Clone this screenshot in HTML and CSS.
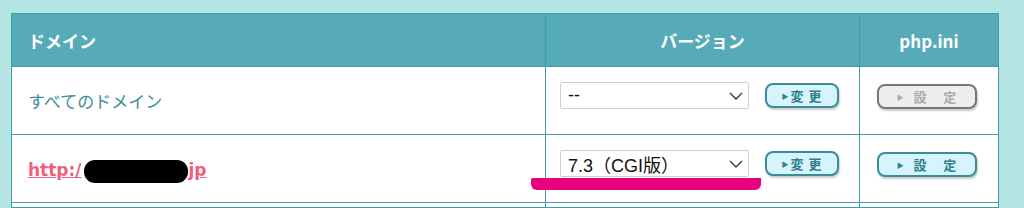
FILE: index.html
```html
<!DOCTYPE html>
<html lang="ja">
<head>
    <meta charset="UTF-8">
    <title>PHP Version</title>
    <link rel="stylesheet" href="styles.css">
</head>
<body>
    <div class="panel">
        <table class="php-table">
            <thead>
                <tr>
                    <th class="col-domain">ドメイン</th>
                    <th class="col-version">バージョン</th>
                    <th class="col-ini">php.ini</th>
                </tr>
            </thead>
            <tbody>
                <tr>
                    <td class="domain-all">すべてのドメイン</td>
                    <td class="version-cell">
                        <div class="version-form">
                            <div class="select-box">
                                <span>--</span>
                                <svg class="chevron" width="14" height="8" viewBox="0 0 14 8"><path d="M1 1 L7 7 L13 1" fill="none" stroke="#333" stroke-width="1.3"/></svg>
                            </div>
                            <button class="img-btn"><span class="tri">▶</span>変&nbsp;更</button>
                        </div>
                    </td>
                    <td class="ini-cell">
                        <button class="img-btn wide disabled"><span class="tri">▶</span>&nbsp;&nbsp;設&nbsp;&nbsp;&nbsp;&nbsp;定</button>
                    </td>
                </tr>
                <tr>
                    <td><a class="domain-link" href="#">http:/<span class="redact"></span>jp</a></td>
                    <td class="version-cell">
                        <div class="version-form">
                            <div class="select-box">
                                <span>7.3（CGI版）</span>
                                <svg class="chevron" width="14" height="8" viewBox="0 0 14 8"><path d="M1 1 L7 7 L13 1" fill="none" stroke="#333" stroke-width="1.3"/></svg>
                            </div>
                            <button class="img-btn"><span class="tri">▶</span>変&nbsp;更</button>
                        </div>
                        <div class="marker"></div>
                    </td>
                    <td class="ini-cell">
                        <button class="img-btn wide"><span class="tri">▶</span>&nbsp;&nbsp;設&nbsp;&nbsp;&nbsp;&nbsp;定</button>
                    </td>
                </tr>
                <tr class="cut-row">
                    <td></td><td></td><td></td>
                </tr>
            </tbody>
        </table>
    </div>
</body>
</html>
```
FILE: styles.css
```css
body {
    margin: 0;
    background-color: #b5e5e3;
    font-family: "Noto Sans CJK JP", "Noto Sans", sans-serif;
    overflow: hidden;
}

.panel {
    padding: 13px 0 0 11px;
}

.php-table {
    width: 988px;
    border-collapse: collapse;
    background-color: #fff;
    table-layout: fixed;
}

.php-table th,
.php-table td {
    border: 1px solid #3f9dab;
    padding: 0;
}

.php-table th {
    height: 52px;
    background-color: #57abb9;
    color: #fff;
    font-size: 17px;
    font-weight: bold;
}

.col-domain {
    width: 517px;
    text-align: left;
    padding-left: 16px !important;
}

.col-version {
    width: 313px;
}

.php-table td {
    height: 67px;
    vertical-align: middle;
}

.domain-all {
    padding-left: 16px !important;
    color: #3a8f9d;
    font-size: 17px;
}

.domain-link {
    margin-left: 16px;
    color: #f0607a;
    font-family: "DejaVu Sans", sans-serif;
    font-size: 17px;
    font-weight: 600;
    text-decoration: underline;
}

.redact {
    display: inline-block;
    width: 104px;
    height: 23px;
    margin: 0 1px -7px 2px;
    background-color: #000;
    border-radius: 11px;
}

.version-cell {
    position: relative;
}

.version-form {
    display: flex;
    align-items: center;
    gap: 16px;
    padding-left: 14px;
    margin-bottom: 10px;
}

.select-box {
    display: flex;
    align-items: center;
    justify-content: space-between;
    box-sizing: border-box;
    width: 189px;
    height: 27px;
    padding: 0 5px 0 7px;
    border: 1px solid #cfcfcf;
    border-radius: 2px;
    background-color: #fff;
    color: #111;
    font-family: "Liberation Sans", "Noto Sans CJK JP", sans-serif;
    font-size: 18px;
}

.img-btn {
    box-sizing: border-box;
    width: 74px;
    height: 25px;
    padding: 0;
    border: 2px solid #3a8c9c;
    border-radius: 8px;
    background-color: #d6f4fb;
    color: #2f7f8c;
    font-family: "Noto Sans CJK JP", sans-serif;
    font-size: 13px;
    font-weight: bold;
    letter-spacing: 1px;
    box-shadow: 1px 2px 2px rgba(0, 0, 0, 0.2);
    cursor: pointer;
}

.tri {
    font-size: 7px;
    vertical-align: 2px;
    margin-right: 1px;
}

.img-btn.wide {
    display: block;
    width: 100px;
    margin: 0 0 9px 17px;
}

.img-btn.disabled {
    border-color: #777;
    background-color: #eee;
    color: #aaa;
}

.marker {
    position: absolute;
    left: -15px;
    top: 43px;
    width: 230px;
    height: 12px;
    background-color: #e8007f;
    border-radius: 2px 0 6px 6px;
}

.cut-row td {
    height: 4px;
}
```
